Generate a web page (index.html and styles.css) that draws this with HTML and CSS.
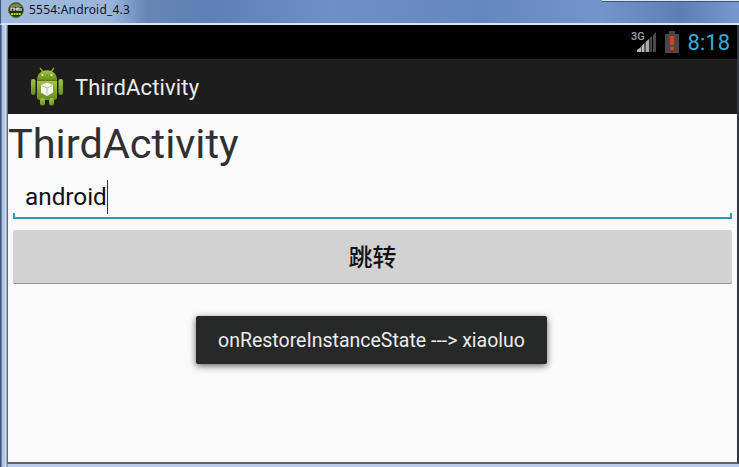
FILE: index.html
```html
<!DOCTYPE html>
<html lang="en">
<head>
    <meta charset="UTF-8">
    <title>5554:Android_4.3</title>
    <link rel="stylesheet" href="styles.css">
</head>
<body>
    <div class="window">
        <div class="title-bar">
            <svg class="window-icon" width="16" height="16" viewBox="0 0 16 16">
                <circle cx="8" cy="8" r="7.5" fill="#26301f" stroke="#5c7d38"/>
                <path d="M2 5a7 7 0 0 1 12 0z" fill="#6f8a55"/>
                <path d="M3 9V6h3v3M6 7h4M9 9V6h2v3M13 6v3" fill="none" stroke="#e8ebe6" stroke-width="1.2"/>
                <path d="M3 12h10" stroke="#a8e02c" stroke-width="2" stroke-dasharray="2 .6"/>
            </svg>
            <span class="window-title">5554:Android_4.3</span>
            <span class="window-controls"></span>
        </div>

        <div class="screen">
            <!-- Status bar -->
            <div class="status-bar">
                <svg class="signal" width="27" height="24" viewBox="0 0 27 24">
                    <text x="0" y="10" class="network">3G</text>
                    <path d="M6 22v-2l4-3v5z" fill="#b5b5b5"/>
                    <path d="M10.500 22v-6l3-3v9z" fill="#b5b5b5"/>
                    <path d="M14.500 22v-10l3.500-3v13z" fill="#a8a8a8"/>
                    <path d="M18.500 22V8l2.500-2v16zM22 22V5l3-3v20z" fill="#4b4b4b"/>
                </svg>
                <svg class="battery" width="14" height="22" viewBox="0 0 14 22">
                    <path d="M4 0h6v3h4v19H0V3h4z" fill="#474747"/>
                    <path d="M4.500 5h5L9 14H5zM5 15.500h4v3.500H5z" fill="#d5401c"/>
                </svg>
                <span class="clock">8:18</span>
            </div>

            <!-- Action bar -->
            <div class="action-bar">
                <svg class="app-icon" width="34" height="40" viewBox="0 0 34 40">
                    <defs>
                        <linearGradient id="green" x1="0" y1="0" x2="0" y2="1">
                            <stop offset="0" stop-color="#a3c63d"/>
                            <stop offset="1" stop-color="#668b20"/>
                        </linearGradient>
                    </defs>
                    <path d="M10 1l3 4M24 1l-3 4" stroke="#87a832" stroke-width="1.300"/>
                    <g fill="url(#green)">
                        <path d="M7 13C7 0 27 0 27 13z"/>
                        <path d="M7 13.500h20V30a3 3 0 0 1-3 3H10a3 3 0 0 1-3-3z"/>
                        <rect x="1" y="12" width="4.500" height="16" rx="2.200"/>
                        <rect x="28.500" y="12" width="4.500" height="16" rx="2.200"/>
                        <rect x="10" y="31" width="5" height="7.500" rx="2.200"/>
                        <rect x="19" y="31" width="5" height="7.500" rx="2.200"/>
                    </g>
                    <circle cx="12.500" cy="8" r="1" fill="#f3f6e8"/>
                    <circle cx="21.500" cy="8" r="1" fill="#f3f6e8"/>
                    <path d="M17 15.500l6 2.500v7.500L17 29l-6-3.500V18z" fill="#f4f6ee"/>
                    <path d="M11.500 18.500l5.500 2.500 5.500-2.500M17 21v6.500" fill="none" stroke="#a9b88a" stroke-width=".9"/>
                </svg>
                <span class="action-title">ThirdActivity</span>
            </div>

            <!-- Activity content -->
            <div class="content">
                <div class="heading">ThirdActivity</div>
                <div class="edit-text"><span class="value">android</span><span class="cursor"></span></div>
                <button class="jump-btn" type="button">跳转</button>
                <div class="toast"><span class="toast-text">onRestoreInstanceState ---&gt; xiaoluo</span></div>
            </div>
        </div>
    </div>
</body>
</html>
```

FILE: styles.css
```css
* {
    margin: 0;
    padding: 0;
    box-sizing: border-box;
}

body {
    width: 739px;
    height: 467px;
    overflow: hidden;
    font-family: Roboto, "Noto Sans CJK SC", sans-serif;
}

.window {
    display: flex;
    flex-direction: column;
    height: 467px;
    padding-left: 7px;
    background: linear-gradient(to right, #3f5378 0, #3f5378 1px, #a9bfe2 2px, #bccdea 5px, #e6eefa 6px, #5a6a88 7px, #b6cdec 8px);
}

.title-bar {
    display: flex;
    align-items: flex-start;
    height: 25px;
    margin-left: -7px;
    padding: 2px 0 0 8px;
    border-left: 1px solid #3f5378;
    border-bottom: 2px solid #d5e4f8;
    background: linear-gradient(to right, #a0b9dd 0, #9bb5da 110px, #6786b6 145px, #5f80b4 210px, #6f90c6 330px, #6487bf 480px, #7395ca 600px, #5e7fb5 680px, #7898ce 739px);
}

.window-icon {
    margin-left: -1px;
}

.window-title {
    margin-left: 5px;
    font-family: "Noto Sans", sans-serif;
    font-size: 12px;
    line-height: 16px;
    letter-spacing: 0.2px;
    color: #10151f;
    white-space: nowrap;
}

.window-controls {
    width: 137px;
    height: 2px;
    margin: -2px 0 0 auto;
    background: #d3ebf0;
    border-bottom: 1px solid #43536c;
}

.screen {
    display: flex;
    flex-direction: column;
    flex: none;
    width: 732px;
    height: 439px;
    border-left: 1px solid #5a6a88;
    border-right: 2px solid #36373b;
    border-bottom: 2px solid #606168;
    background: #fafafa;
}

.status-bar {
    display: flex;
    align-items: center;
    justify-content: flex-end;
    height: 34px;
    padding-right: 7px;
    background: #000;
}

.network {
    font-size: 11px;
    font-weight: 500;
    fill: #a4a4a4;
}

.battery {
    margin-left: 7px;
}

.clock {
    margin-left: 9px;
    padding-top: 2px;
    font-size: 22px;
    line-height: 34px;
    color: #35aedb;
}

.action-bar {
    display: flex;
    align-items: center;
    height: 55px;
    padding-left: 22px;
    background: #1d1d1d;
    border-top: 1px solid #252525;
}

.action-title {
    margin-left: 11px;
    padding-top: 1px;
    font-size: 22px;
    letter-spacing: 0.15px;
    color: #ececec;
}

.content {
    display: flex;
    flex-direction: column;
}

.heading {
    height: 60px;
    font-size: 41.5px;
    line-height: 60px;
    color: #303030;
}

.edit-text {
    display: flex;
    align-items: center;
    height: 45px;
    margin: 0 5px;
    padding: 0 0 0 12px;
    font-size: 24.3px;
    color: #111;
    background:
        linear-gradient(#2c9abd, #2c9abd) left bottom / 100% 2px no-repeat,
        linear-gradient(#2c9abd, #2c9abd) left bottom / 2px 6px no-repeat,
        linear-gradient(#2c9abd, #2c9abd) right bottom / 2px 6px no-repeat;
}

.cursor {
    width: 1px;
    height: 34px;
    background: #333;
}

.jump-btn {
    height: 54px;
    margin: 11px 5px 0;
    padding-bottom: 2px;
    border: none;
    border-bottom: 1px solid #929292;
    border-radius: 2px;
    background: #d2d2d2;
    font-family: "Noto Sans CJK SC", sans-serif;
    font-size: 24px;
    font-weight: 500;
    color: #111;
}

.toast {
    align-self: center;
    width: 351px;
    height: 48px;
    margin: 32px 0 0 -2px;
    border-radius: 2px;
    background: #272928;
    box-shadow: 0 2px 7px rgba(0, 0, 0, 0.6);
    font-size: 19.5px;
    line-height: 50px;
    text-align: center;
    color: #ececec;
    white-space: nowrap;
}
```
